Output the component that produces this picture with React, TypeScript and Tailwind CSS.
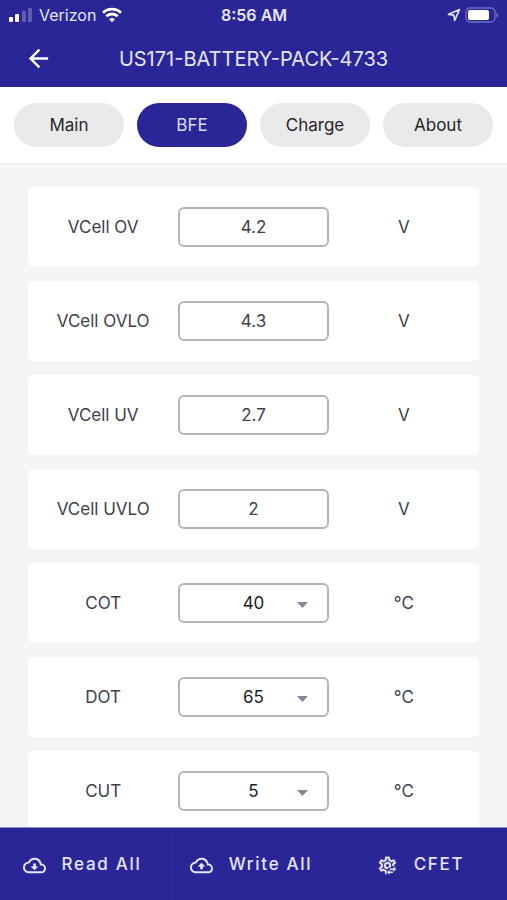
import { MdArrowBack, MdOutlineCloudDownload, MdOutlineCloudUpload } from "react-icons/md";

const tabs = ["Main", "BFE", "Charge", "About"];

const settings = [
  { id: "vcell-ov", label: "VCell OV", value: "4.2", unit: "V" },
  { id: "vcell-ovlo", label: "VCell OVLO", value: "4.3", unit: "V" },
  { id: "vcell-uv", label: "VCell UV", value: "2.7", unit: "V" },
  { id: "vcell-uvlo", label: "VCell UVLO", value: "2", unit: "V" },
  { id: "cot", label: "COT", value: "40", unit: "°C", options: ["40", "45", "50"] },
  { id: "dot", label: "DOT", value: "65", unit: "°C", options: ["60", "65", "70"] },
  { id: "cut", label: "CUT", value: "5", unit: "°C", options: ["0", "5", "10"] },
];

function SignalIcon() {
  return (
    <svg width="24" height="16" viewBox="0 0 24 16" fill="white">
      <rect x="0" y="10" width="4" height="5" rx="1" />
      <rect x="6" y="7" width="4" height="8" rx="1" />
      <rect x="13" y="4" width="4" height="11" rx="1" opacity="0.25" />
      <rect x="19" y="1" width="4" height="14" rx="1" opacity="0.25" />
    </svg>
  );
}

function WifiIcon() {
  return (
    <svg width="20" height="16" viewBox="0 0 20 16" fill="none" stroke="white" strokeWidth="2.8">
      <path d="M1 5.8C6 .9 14 .9 19 5.8" />
      <path d="M4.3 9.3c3.2-3.1 8.2-3.1 11.4 0" />
      <path d="M10 15.2l-2.9-3c1.6-1.6 4.2-1.6 5.8 0z" fill="white" stroke="none" />
    </svg>
  );
}

function LocationIcon() {
  return (
    <svg width="14" height="14" viewBox="0 0 14 14" fill="none" stroke="#e0e0ff" strokeWidth="1.7" strokeLinejoin="round">
      <path d="M12.5 1.5L1.5 6.3l5.3.9.9 5.3z" />
    </svg>
  );
}

function BatteryIcon() {
  return (
    <svg width="34" height="16" viewBox="0 0 34 16" fill="none">
      <rect x="1" y="1" width="29" height="14" rx="4" stroke="#6f6cc0" strokeWidth="1.3" />
      <rect x="3" y="3" width="21" height="10" rx="2" fill="white" />
      <path d="M31.5 5.5c2 .8 2 4.2 0 5z" fill="#8582cc" />
    </svg>
  );
}

// gear with two transfer arrows in the lower right corner
function GearTransferIcon() {
  return (
    <svg width="21" height="21" viewBox="0 0 24 24" fill="currentColor">
      <mask id="gear-cut">
        <rect width="24" height="24" fill="white" />
        <path d="M13 14.5h4V12.6l1-.4 6 3.8v8H11v-4z" fill="black" />
      </mask>
      <path
        mask="url(#gear-cut)"
        fillRule="evenodd"
        stroke="currentColor"
        strokeWidth="0.4"
        d="M12 8a4 4 0 1 1 0 8 4 4 0 0 1 0-8m0 2a2 2 0 1 0 0 4 2 2 0 0 0 0-4M10 22c-.25 0-.46-.18-.5-.42l-.37-2.65c-.63-.25-1.17-.59-1.69-.99l-2.49 1.01c-.22.08-.49 0-.61-.22l-2-3.46c-.13-.22-.07-.49.12-.64l2.11-1.66L4.5 12l.07-1-2.11-1.63c-.19-.15-.25-.42-.12-.64l2-3.46c.12-.22.39-.31.61-.22l2.49 1c.52-.39 1.06-.73 1.69-.98l.37-2.65c.04-.24.25-.42.5-.42h4c.25 0 .46.18.5.42l.37 2.65c.63.25 1.17.59 1.69.98l2.49-1c.22-.09.49 0 .61.22l2 3.46c.13.22.07.49-.12.64L19.43 11l.07 1-.07 1 2.11 1.63c.19.15.25.42.12.64l-2 3.46c-.12.22-.39.31-.61.22l-2.49-1c-.52.39-1.06.73-1.69.98l-.37 2.65c-.04.24-.25.42-.5.42zM11.25 4l-.37 2.61c-1.2.25-2.26.89-3.03 1.78L5.44 7.35l-.75 1.3L6.8 10.2c-.4 1.17-.4 2.44 0 3.6l-2.12 1.56.75 1.3 2.43-1.04c.77.88 1.82 1.52 3.01 1.76l.37 2.62h1.52l.37-2.61c1.19-.25 2.24-.89 3.01-1.77l2.43 1.04.75-1.3-2.12-1.55c.4-1.17.4-2.44 0-3.61l2.11-1.55-.75-1.3-2.41 1.04c-.77-.89-1.83-1.53-3.03-1.77L12.75 4z"
      />
      <path d="M22 16.2l-3.2-2.9v2h-4v1.8h4v2zM11.2 19.8l3.2 2.9v-2h3.8v-1.8h-3.8v-2z" />
    </svg>
  );
}

const actions = [
  { label: "Read All", icon: <MdOutlineCloudDownload size={23} /> },
  { label: "Write All", icon: <MdOutlineCloudUpload size={23} /> },
  { label: "CFET", icon: <GearTransferIcon /> },
];

export default function App() {
  return (
    <div className="flex h-screen flex-col bg-[#f5f5f5] font-['Inter',sans-serif]">
      <header className="bg-[#2a2697] text-[#e6e6ff]">
        {/* Status bar */}
        <div className="grid h-[30px] grid-cols-3 items-center pr-2 pl-[9px] text-base">
          <div className="flex items-center gap-[6px]">
            <SignalIcon />
            <span>Verizon</span>
            <WifiIcon />
          </div>
          <span className="text-center font-semibold">8:56 AM</span>
          <div className="flex items-center justify-end gap-1">
            <LocationIcon />
            <BatteryIcon />
          </div>
        </div>

        {/* Title bar */}
        <div className="grid h-[57px] grid-cols-[76px_1fr_76px] items-center">
          <button type="button" aria-label="Back" className="flex justify-center text-white">
            <MdArrowBack size={29} />
          </button>
          <h1 className="text-center text-xl">US171-BATTERY-PACK-4733</h1>
        </div>
      </header>

      {/* Tabs */}
      <nav className="grid grid-cols-4 gap-[13px] border-b border-[#ebebeb] bg-white px-[14px] py-4">
        {tabs.map((tab) => (
          <button
            key={tab}
            type="button"
            className={
              tab === "BFE"
                ? "h-11 rounded-full bg-[#2a2697] pt-0.5 text-[17px] text-[#dcdcff]"
                : "h-11 rounded-full bg-[#eaeaea] pt-0.5 text-[17px] text-[#26262a]"
            }
          >
            {tab}
          </button>
        ))}
      </nav>

      {/* Settings list */}
      <main className="flex min-h-0 flex-1 flex-col gap-[14px] overflow-y-auto px-7 pt-[23px] [scrollbar-width:none]">
        {settings.map((item) => (
          <div
            key={item.id}
            className="grid h-20 shrink-0 grid-cols-3 items-center rounded-md bg-white text-center text-[17px] text-[#3f404b]"
          >
            <label htmlFor={item.id} className="pt-0.5">
              {item.label}
            </label>
            {item.options ? (
              <div className="relative">
                <select
                  id={item.id}
                  defaultValue={item.value}
                  className="block h-10 w-full appearance-none rounded-md border-2 border-[#b5b5b5] bg-white pt-0.5 text-center text-[#1c1c20] [text-align-last:center]"
                >
                  {item.options.map((option) => (
                    <option key={option}>{option}</option>
                  ))}
                </select>
                <svg
                  className="pointer-events-none absolute top-[19px] right-[21px]"
                  width="11"
                  height="6"
                  viewBox="0 0 11 6"
                  fill="#86869a"
                >
                  <path d="M0 0h11L5.5 6z" />
                </svg>
              </div>
            ) : (
              <input
                id={item.id}
                type="text"
                inputMode="decimal"
                defaultValue={item.value}
                className="h-10 w-full rounded-md border-2 border-[#b5b5b5] bg-white text-center"
              />
            )}
            <span className="pt-0.5">{item.unit}</span>
          </div>
        ))}
      </main>

      {/* Bottom actions */}
      <footer className="grid h-[73px] shrink-0 grid-cols-3 divide-x divide-[#252187] border-t border-[#8f8dc8] bg-[#2a2697]">
        {actions.map((action) => (
          <button
            key={action.label}
            type="button"
            className="flex items-center justify-center gap-4 pt-0.5 pr-1 text-[17px] font-medium tracking-widest text-[#e6e6ff]"
          >
            {action.icon}
            {action.label}
          </button>
        ))}
      </footer>
    </div>
  );
}
